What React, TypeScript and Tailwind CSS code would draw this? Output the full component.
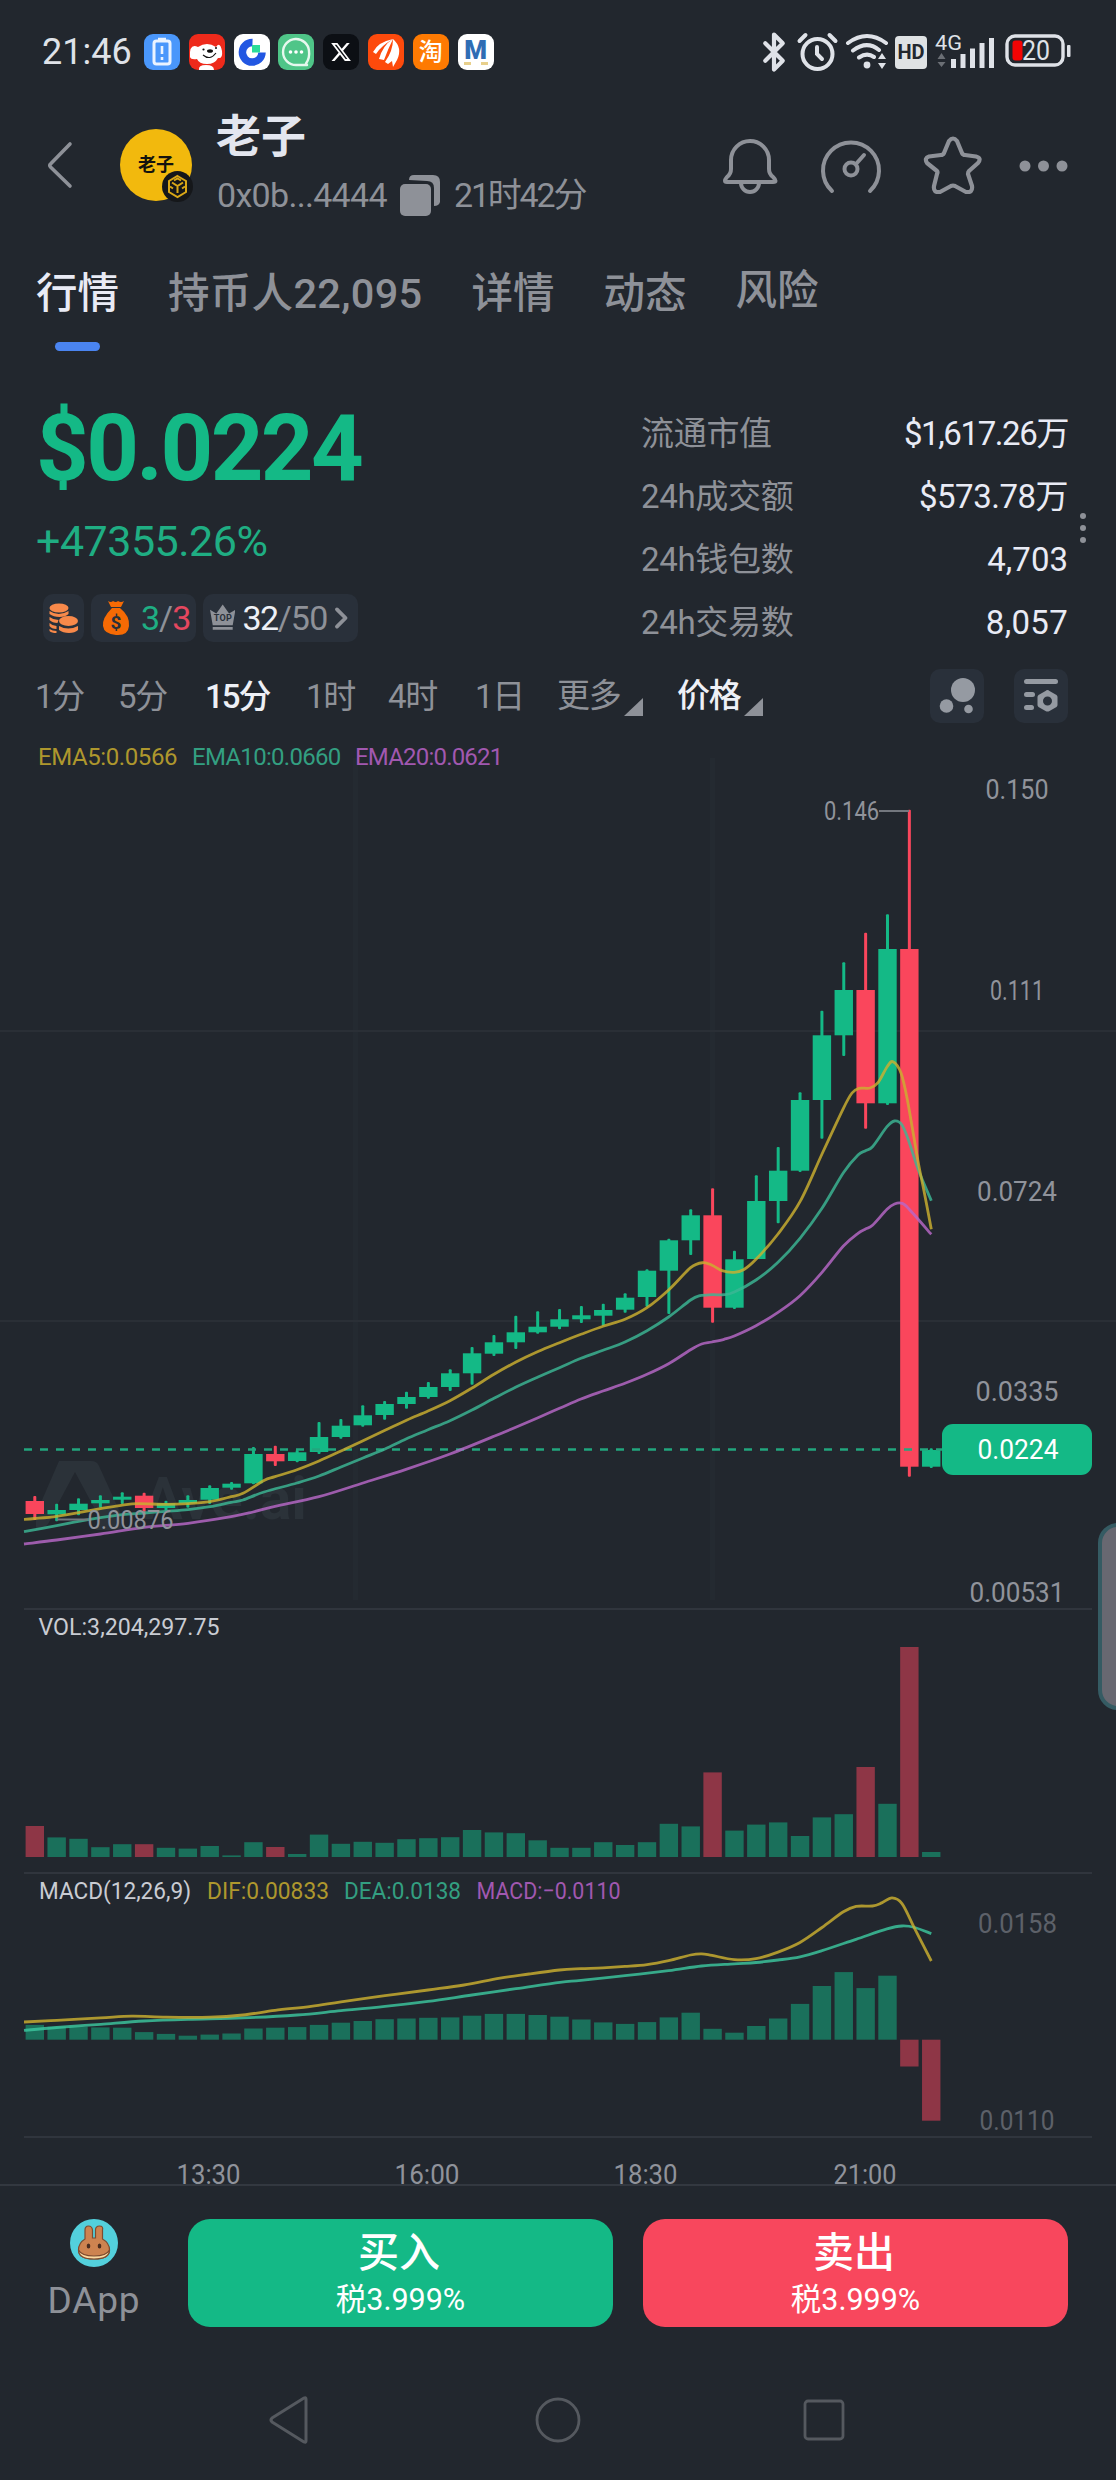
import React from "react";
import { Bluetooth, ChevronRight } from "lucide-react";
import { FaXTwitter } from "react-icons/fa6";

const UP = "#14b986";
const DOWN = "#fa465c";
const FONT = "font-['Roboto','Noto_Sans_CJK_SC',sans-serif]";

// Chart geometry, in page pixels
const FIRST_X = 34.8;
const STEP = 21.864;
const BAR_W = 18.4;

const cx = (i: number) => FIRST_X + i * STEP;

// [high, body top, body bottom, low]
const candles: [number, number, number, number][] = [
  [1496, 1501, 1514, 1520],
  [1503.7, 1510, 1514.3, 1521.3],
  [1498.3, 1503.7, 1510, 1515.3],
  [1495.3, 1500, 1503.3, 1507.7],
  [1492.3, 1496.7, 1499.7, 1504],
  [1492.7, 1495.7, 1508, 1515],
  [1500.7, 1503.3, 1508, 1510.7],
  [1495.3, 1500, 1503.3, 1507.7],
  [1485.3, 1488, 1499.7, 1504],
  [1482, 1483.7, 1487.7, 1489.7],
  [1447, 1454, 1483.3, 1484.3],
  [1445.7, 1454, 1461.3, 1466],
  [1450, 1452.3, 1461, 1462.3],
  [1422, 1437, 1452, 1454],
  [1419, 1425.7, 1437, 1438.7],
  [1405.3, 1415.3, 1425.3, 1426.7],
  [1401, 1404, 1415, 1419.7],
  [1391.7, 1397, 1404, 1408.7],
  [1382, 1387, 1397, 1398.7],
  [1369.3, 1373.3, 1387, 1391],
  [1347, 1353.3, 1373.3, 1384.7],
  [1335, 1342.3, 1353.7, 1356],
  [1315.7, 1332.3, 1342.3, 1349],
  [1311.3, 1326.7, 1332.3, 1333.7],
  [1309, 1319.3, 1326.7, 1329.3],
  [1306, 1315.3, 1319.3, 1323],
  [1303.7, 1310, 1315.7, 1325.7],
  [1293.3, 1297.7, 1309.7, 1312.7],
  [1269.3, 1270.7, 1297, 1306.7],
  [1238.7, 1240.3, 1270.7, 1314],
  [1209.3, 1215.3, 1240.3, 1255],
  [1188.3, 1215.3, 1307.7, 1322.7],
  [1250.7, 1259.3, 1307.7, 1309],
  [1175.3, 1201, 1259, 1259],
  [1147, 1170.7, 1201, 1223.3],
  [1092.3, 1100, 1170.7, 1172],
  [1010.7, 1035.3, 1100, 1138.7],
  [962.3, 990, 1035.3, 1056],
  [932.7, 990, 1103.3, 1128.7],
  [914.3, 949, 1103.3, 1105],
  [809.7, 949, 1466.7, 1476.7],
  [1448.3, 1450, 1466.7, 1468],
];
const redCandles = [0, 5, 11, 31, 38, 40];

const volume = [
  31, 19.6, 18.2, 9.8, 12.8, 12.8, 9.2, 8.4, 11, 1.6, 14.8, 10, 3, 22.4, 13.2, 15.2, 14.2, 17.8,
  18.8, 19.8, 27, 24.6, 23.8, 16.7, 9.2, 9.2, 14.8, 12, 14.8, 33.2, 30.6, 84.6, 26.4, 32.4, 34.6,
  21, 39.6, 42.8, 90, 53.2, 210, 5,
];

const macd = [
  14.8, 13, 13, 12.3, 12, 7.6, 5.8, 4, 5.1, 6.2, 11.2, 12, 12.6, 14.8, 17, 18.7, 20.5, 21.2, 21.9,
  22.3, 24, 25.8, 25.8, 24.7, 23, 20.2, 17.3, 15.8, 17.6, 22.3, 27, 10.9, 7, 13.7, 21.2, 35.8, 53.7,
  67.6, 51.6, 64, -26.8, -81,
];

type Pt = [number, number];

const ema5: Pt[] = [
  [24, 1519.3], [35, 1518.5], [56.7, 1516.3], [78.6, 1512.7], [100.5, 1508.7], [122.4, 1505.2],
  [138, 1503.7], [166, 1504.3], [188, 1503.7], [210, 1501.7], [231, 1496.7], [243, 1493.3],
  [264, 1480.5], [275, 1476.7], [297, 1469.7], [319, 1461], [341, 1451], [363, 1440.7],
  [385, 1430.3], [407, 1420], [428, 1411], [450, 1400.7], [472, 1388], [494, 1374.3], [516, 1362],
  [538, 1351.5], [559.5, 1342.7], [581, 1334.3], [603, 1326.3], [625, 1319.3], [647, 1307.7],
  [668.6, 1290], [690.6, 1267.7], [703, 1262.7], [712, 1265.3], [722, 1270.7], [734.3, 1272.3],
  [744, 1269.5], [756, 1259.3], [778, 1234], [800, 1201.7], [822, 1154], [843.4, 1108.3],
  [852, 1093], [859, 1088.3], [870, 1088], [878, 1082.7], [887, 1067], [893, 1061.7],
  [901, 1073], [907.4, 1100], [918.4, 1163.3], [924, 1191], [931.3, 1229.3],
];
const ema10: Pt[] = [
  [24, 1531.7], [56.7, 1525.7], [78.6, 1521.3], [100.5, 1517.7], [122.4, 1514.7], [144, 1513],
  [166, 1511.3], [188, 1509.7], [210, 1506.7], [231, 1502.3], [243, 1500], [264, 1492],
  [297, 1483], [319, 1476], [341, 1467], [363, 1458], [385, 1449], [406, 1439], [428, 1429.7],
  [450, 1420.7], [472, 1410], [494, 1398.3], [516, 1387], [538, 1377], [559.5, 1367.7],
  [581, 1358.3], [603, 1350.3], [625, 1342], [647, 1330.7], [668.6, 1317], [690.6, 1300],
  [700, 1295.7], [712, 1294.7], [724, 1294.7], [734.3, 1292], [756, 1280], [778, 1262.3],
  [800, 1238.3], [822, 1208.3], [843.4, 1172.7], [858, 1155], [865.5, 1150.7], [872.5, 1146.7],
  [887, 1126.7], [894.5, 1121], [902, 1125], [909, 1141.7], [918.4, 1170], [931.3, 1200.7],
];
const ema20: Pt[] = [
  [24, 1544], [56.7, 1540], [100.5, 1534], [144, 1527.3], [188, 1523.3], [231, 1516.7],
  [253, 1512], [275, 1506.3], [319, 1496.7], [363, 1483], [406, 1469.3], [450, 1454],
  [494, 1436.3], [538, 1417.7], [559.5, 1408.3], [581, 1399], [603, 1391], [625, 1383.3],
  [647, 1374.3], [668.6, 1363.7], [690.6, 1349.7], [701.6, 1344], [712, 1342], [724, 1339.3],
  [734.3, 1336], [756, 1325.7], [778, 1312.3], [800, 1295.7], [822, 1272.3], [843.4, 1246],
  [858, 1233.3], [865.5, 1229], [872.5, 1225.3], [887, 1209.3], [894.5, 1204], [902, 1203.3],
  [909, 1209], [931.3, 1234.3],
];
const dif: Pt[] = [
  [24, 2022], [56.8, 2020.4], [100.7, 2017.9], [132, 2016.1], [166, 2017.1], [210, 2017.1],
  [243, 2015], [275, 2010.4], [311, 2006.4], [341, 2001.8], [385, 1995.7], [428, 1990],
  [464, 1985], [500, 1978.2], [529, 1974], [559.5, 1970], [581, 1968.6], [603, 1967.9],
  [625, 1966.4], [647, 1964.6], [668.6, 1960.7], [690.6, 1955], [701.6, 1953.9], [712, 1955.4],
  [734.3, 1959.6], [756, 1958.6], [778, 1952.1], [800, 1942.5], [822, 1927.5], [843.4, 1911.8],
  [856, 1906.4], [872.5, 1906], [881.7, 1902.9], [892, 1897.9], [902, 1903.6], [914.7, 1928.6],
  [931.3, 1961],
];
const dea: Pt[] = [
  [24, 2030.4], [56.8, 2027.5], [100.7, 2024.3], [144, 2021], [188, 2019.3], [243, 2017.9],
  [297, 2015], [341, 2010.7], [385, 2006.4], [428, 2001.4], [472, 1995], [516, 1988.6],
  [560, 1982.3], [581, 1980.4], [625, 1975.7], [668.6, 1970.7], [701.6, 1966], [734.3, 1963.9],
  [756, 1962.5], [778, 1960], [800, 1956.8], [822, 1950.7], [856, 1939.3], [887, 1928.9],
  [902, 1926], [914.7, 1927.5], [931.3, 1933.6],
];

const r1 = (n: number) => Math.round(n * 10) / 10;

// Catmull-Rom spline through the points
const smooth = (p: Pt[]) =>
  p.reduce((d, [x, y], i) => {
    if (i === 0) return `M${x} ${y}`;
    const a = p[Math.max(i - 2, 0)];
    const b = p[i - 1];
    const e = p[Math.min(i + 1, p.length - 1)];
    return `${d}C${r1(b[0] + (x - a[0]) / 6)} ${r1(b[1] + (y - a[1]) / 6)} ${r1(
      x - (e[0] - b[0]) / 6
    )} ${r1(y - (e[1] - b[1]) / 6)} ${x} ${y}`;
  }, "");

const Line: React.FC<{ points: Pt[]; color: string }> = ({ points, color }) => (
  <path d={smooth(points)} fill="none" stroke={color} strokeWidth={2.8} strokeOpacity={0.82} />
);

const ChartText: React.FC<{
  x: number;
  y: number;
  w: number;
  size?: number;
  fill?: string;
  children: string;
}> = ({ x, y, w, size = 28, fill = "#90939b", children }) => (
  <text x={x - w / 2} y={y + size * 0.35} fontSize={size} fill={fill} textLength={w} lengthAdjust="spacingAndGlyphs">
    {children}
  </text>
);

const StatusBar = () => (
  <div className="flex h-[104px] items-center pl-[42px] pr-[44px] text-[#dfe2e8]">
    <span className="w-[102px] text-[36px] leading-none">21:46</span>
    <div className="flex gap-[8.8px]">
      <svg width="36" height="36" viewBox="0 0 36 36">
        <rect width="36" height="36" rx="9" fill="#4a97fb" />
        <rect x="10" y="7" width="16" height="23" rx="2.5" fill="none" stroke="#eaf3ff" strokeWidth="3" />
        <path d="M14 5h8M18 12v8M18 23v3" stroke="#eaf3ff" strokeWidth="2.6" />
      </svg>
      <svg width="36" height="36" viewBox="0 0 36 36">
        <rect width="36" height="36" rx="9" fill="#ee2a1b" />
        <path d="M9 13Q18 7 27 13Q31 7 33 17Q34 25 29 24Q26 30 18 30T8 25Q2 26 1 23Q0 9 9 13Z" fill="#fff" />
        <path d="M10 36Q9 31 17 31T25 36Z" fill="#fff" />
        <ellipse cx="21" cy="17" rx="3" ry="1.8" fill="#111" />
        <circle cx="14.5" cy="15.5" r="1.1" fill="#111" />
        <circle cx="27" cy="14" r="1" fill="#111" />
        <path d="M14 21Q21 27 27 19" fill="none" stroke="#111" strokeWidth="1.1" />
      </svg>
      <svg width="36" height="36" viewBox="0 0 36 36">
        <rect width="36" height="36" rx="9" fill="#fff" />
        <path d="M18.5 8.5A9.8 9.8 0 1 0 28 18.500" fill="none" stroke="#2257e2" strokeWidth="7.500" />
        <rect x="18" y="11" width="8" height="7.5" fill="#2bdc9a" />
      </svg>
      <svg width="36" height="36" viewBox="0 0 36 36">
        <rect width="36" height="36" rx="9" fill="#4fc588" />
        <path d="M28 29.500Q32 24 31 17A13 13 0 1 0 18 31H29Z" fill="none" stroke="#e6f8ee" strokeWidth="2.4" strokeLinejoin="round" />
        <circle cx="12.500" cy="18" r="1.800" fill="#fff" />
        <circle cx="18" cy="18" r="1.800" fill="#fff" />
        <circle cx="23.500" cy="18" r="1.800" fill="#fff" />
      </svg>
      <span className="flex h-9 w-9 items-center justify-center rounded-[9px] bg-[#0c0f14]">
        <FaXTwitter className="h-[22px] w-[22px] text-white" />
      </span>
      <svg width="36" height="36" viewBox="0 0 36 36">
        <rect width="36" height="36" rx="9" fill="#fd4a0c" />
        <path d="M5 18Q10 8 25 5Q13 12 8 20ZM11 25Q15 11 25 5Q20 15 16 26ZM17 28Q25 17 25 5Q35 14 29 26L25 33L24 27L20 30Z" fill="#fff" />
      </svg>
      <span className="flex h-9 w-9 items-center justify-center rounded-[9px] bg-[#fe7a02] text-[24px] font-medium leading-none text-white">
        淘
      </span>
      <span className="flex h-9 w-9 flex-col items-center justify-center rounded-[9px] bg-white leading-none">
        <span className="text-[26px] font-black leading-[20px] text-[#2f6db4]">M</span>
        <span className="mt-[2px] h-[3px] w-6 border-x-[7px] border-[#e8d08c]" />
      </span>
    </div>
    <div className="ml-auto flex items-center">
      <Bluetooth className="mr-[1px] h-[42px] w-[42px]" strokeWidth={2.4} />
      <svg width="43" height="42" viewBox="0 0 43 42" fill="none" stroke="currentColor" strokeWidth="4" strokeLinecap="round">
        <circle cx="21.500" cy="23" r="15" />
        <path d="M21 16v7l5 5M3.500 10l6-6M39.500 10l-6-6" />
      </svg>
      <svg className="ml-[6px]" width="44" height="42" viewBox="3 0 44 42" fill="none" stroke="currentColor" strokeWidth="4" strokeLinecap="round">
        <path d="M6 12Q25-2 44 12M11 19.500Q25 9 37 19M17 26.500Q25 21 32 26" />
        <circle cx="25" cy="34" r="3.400" fill="currentColor" stroke="none" />
        <path d="M36 28l4-6 4 6ZM36 32l4 6 4-6Z" fill="currentColor" stroke="none" />
      </svg>
      <span className="ml-[6px] mr-[8px] flex h-[33px] w-8 items-center justify-center rounded-[4px] bg-[#dfe2e4] text-[20px] font-bold leading-none text-[#22272e]">
        HD
      </span>
      <svg width="62" height="40" viewBox="0 0 62 40" fill="currentColor">
        <text x="0" y="18" fontSize="21" textLength="27" lengthAdjust="spacingAndGlyphs">4G</text>
        <path d="M2.500 27l4-6 4 6ZM2.500 30l4 5 4-5Z" fill="#6b6f75" />
        <path d="M16 27h5v9h-5ZM25.500 22h5v14h-5ZM35 16.500h5v19.500h-5ZM44.500 11h5v25h-5ZM54 6h5v30h-5Z" />
      </svg>
      <svg className="mb-[2px] ml-[8px]" width="67" height="34" viewBox="0 0 67 34">
        <rect x="2" y="2" width="56" height="29" rx="8" fill="none" stroke="currentColor" strokeWidth="3.400" />
        <rect x="7.500" y="6.500" width="10" height="20" rx="3" fill="#f30404" />
        <text x="17" y="26" fontSize="27" fill="currentColor" textLength="28" lengthAdjust="spacingAndGlyphs">20</text>
        <rect x="62" y="11" width="3.500" height="12" rx="1" fill="currentColor" />
      </svg>
    </div>
  </div>
);

const Header = () => (
  <div className="flex h-[130px] items-center pl-[46px] pr-[47px]">
    <svg width="28" height="50" viewBox="0 0 28 50" className="mb-[8px]" fill="none" stroke="#8e9198" strokeWidth="3.600" strokeLinecap="round" strokeLinejoin="round">
      <path d="M24 4L4.500 24Q3 25 4.500 27L24 46" />
    </svg>
    <div className="relative mb-[8px] ml-[46px] flex h-[72px] w-[72px] items-center justify-center rounded-full bg-[#f2b90d]">
      <span className="text-[18px] font-bold leading-none text-[#14130e]">老子</span>
      <svg className="absolute -bottom-[1px] -right-[1px]" width="31" height="31" viewBox="0 0 31 31">
        <circle cx="15.500" cy="15.500" r="15.500" fill="#15171a" />
        <g fill="none" stroke="#d9a717" strokeWidth="2">
          <path d="M15.500 5L24 10v11l-8.500 5L7 21V10Z" />
          <path d="M10 11.500l5.500 3.500 5.500-3.500M15.500 15v7M11 17.500l-3-2M20 17.500l3-2M12 9.500l3.500-2 3.500 2" />
        </g>
      </svg>
    </div>
    <div className="mb-[5px] ml-[25px] flex flex-col">
      <span className="-ml-[1px] text-[45px] font-bold leading-[50px] text-[#e3e6ef]">老子</span>
      <div className="mt-[7px] flex h-[50px] items-center text-[34px] leading-none text-[#8e9198]">
        <span className="w-[183px] tracking-[-0.7px]">0x0b...4444</span>
        <svg width="40" height="42" viewBox="0 0 40 42" fill="#8e9198">
          <rect y="10" width="31" height="32" rx="5" />
          <path d="M9 6Q9 1 14 1H33Q40 1 40 8V28Q39 32 34 32V14Q34 7 27 7Z" />
        </svg>
        <span className="ml-[14px] tracking-[-2.200px]">21时42分</span>
      </div>
    </div>
    <div className="mb-[9px] ml-auto flex items-center text-[#8e9198]">
      <svg width="56" height="58" viewBox="0 0 56 58" fill="none" stroke="currentColor" strokeWidth="4" strokeLinejoin="round">
        <path d="M9 24a19 19 0 0 1 38 0v9q0 5 4 8q5 5 0 5H5q-4 0 0-5q4-3 4-8Z" />
        <path d="M19 47a9 9 0 0 0 18 0" />
      </svg>
      <svg className="ml-[42px]" width="62" height="58" viewBox="0 0 62 58" fill="none" stroke="currentColor" strokeWidth="4" strokeLinecap="round">
        <path d="M12 55A28 28 0 1 1 50 55" />
        <circle cx="31" cy="33" r="6.500" />
        <path d="M36 28l8-9" />
      </svg>
      <svg className="ml-[41px]" width="60" height="58" viewBox="0 0 60 58" fill="none" stroke="currentColor" strokeWidth="4.200" strokeLinejoin="round">
        <path d="M26 5Q30 0 34 5L39 17Q40 19 42 19L53 20.500Q59 22 55 27L46 35Q45 36 45 38L49 50Q50 57 43 56L32 50Q30 49 28 50L17 56Q10 57 11 50L14 38Q15 36 14 35L4 27Q1 22 6 20.500L18 19Q20 19 21 17Z" />
      </svg>
      <svg className="ml-[36px] mt-[2px]" width="50" height="14" viewBox="0 0 50 14" fill="currentColor">
        <circle cx="6" cy="7" r="5.500" />
        <circle cx="24.500" cy="7" r="5.500" />
        <circle cx="43" cy="7" r="5.500" />
      </svg>
    </div>
  </div>
);

const Tabs = () => (
  <div className="flex h-[126px] items-start gap-[49px] pl-[36px] pt-[39px] text-[41.500px] font-medium leading-[42px] text-[#8e9198]">
    <div className="flex flex-col items-center text-[#e9ebf5]">
      <span>行情</span>
      <span className="mt-[27px] h-[9px] w-[45px] rounded-full bg-[#4a84f0]" />
    </div>
    <span className="tracking-[0.300px]">持币人22,095</span>
    <span>详情</span>
    <span>动态</span>
    <span className="-mt-[3px]">风险</span>
  </div>
);

const stats = [
  ["流通市值", "$1,617.26万", "tracking-[-1.4px]"],
  ["24h成交额", "$573.78万", "tracking-[-0.5px]"],
  ["24h钱包数", "4,703", "tracking-normal"],
  ["24h交易数", "8,057", "tracking-[0.3px]"],
];

const Summary = () => (
  <div className="relative flex h-[302px] pl-[36px] pr-[48px]">
    <div className="flex w-[605px] flex-col">
      <span className="mt-[43px] h-[92px] text-[92px] font-bold leading-[92px] tracking-[-2.600px] text-[#14b986]">
        $0.0224
      </span>
      <span className="mt-[24px] h-[44px] text-[43px] leading-[44px] tracking-[-0.500px] text-[#1fae83]">
        +47355.26%
      </span>
      <div className="ml-[7px] mt-[31px] flex h-[48px] gap-[7px] text-[34px] leading-none">
        <div className="flex w-[41px] items-center justify-center rounded-[10px] bg-[#29303a]">
          <svg width="32" height="32" viewBox="0 0 32 32" fill="#f8894a">
            <ellipse cx="11" cy="6" rx="9.500" ry="4.500" />
            <path d="M1.500 9q9 6 19 0v3q-3 3-9 3t-10-3ZM1.500 15q4 3 9 3l-1 3q-5 0-8-3ZM1.500 21q3 3 7 3v3q-5 0-7-3ZM1.500 27q3 2 7 2v2q-5 0-7-2Z" />
            <ellipse cx="20.500" cy="19" rx="9.500" ry="5" />
            <path d="M11 24q9 5 19 0v4q-3 3-9 3t-10-3Z" />
          </svg>
        </div>
        <div className="flex w-[105px] items-center rounded-[10px] bg-[#29303a] pl-[11px]">
          <svg width="28" height="36" viewBox="0 0 28 36" fill="#f56a04">
            <path d="M6 1q3 2 5 0q3 2 5 0q3 2 6 0l-3 6H9ZM10 8h8Q28 16 27 26T14 35T1 26T10 8Z" />
            <text x="8.500" y="29" fontSize="19" fontWeight="700" fill="#29303a">$</text>
          </svg>
          <span className="ml-[11px] tracking-[-1px] text-[#8e9198]">
            <span className="text-[#1fae83]">3</span>/<span className="text-[#e5475f]">3</span>
          </span>
        </div>
        <div className="flex w-[155px] items-center rounded-[10px] bg-[#29303a] pl-[7px]">
          <svg width="28" height="30" viewBox="0 0 28 30" fill="#8e9198">
            <path d="M0 6l7 4 7-10 7 10 7-4-3 17H3ZM3 25h22v3H3Z" />
            <text x="4" y="18.500" fontSize="10" fontWeight="700" fill="#29303a" textLength="20">TOP</text>
          </svg>
          <span className="ml-[7px] tracking-[-1.500px] text-[#eef0f6]">32</span>
          <span className="tracking-[-0.800px] text-[#8e9198]">/50</span>
          <ChevronRight className="-ml-[4px] h-[42px] w-[38px] text-[#8e9198]" strokeWidth={2.600} />
        </div>
      </div>
    </div>
    <div className="mt-[42px] flex-1 text-[33px] leading-[63px]">
      {stats.map(([label, value, tracking]) => (
        <div key={label} className="flex h-[63px] items-center justify-between">
          <span className="tracking-[-0.300px] text-[#8e9198]">{label}</span>
          <span className={`${tracking} text-[#e9ebf5]`}>{value}</span>
        </div>
      ))}
    </div>
    {/* page indicator */}
    <div className="absolute right-[30px] top-[153px] flex flex-col gap-[6px]">
      <i className="h-[6px] w-[6px] rounded-full bg-[#8e9198]" />
      <i className="h-[6px] w-[6px] rounded-full bg-[#8e9198]" />
      <i className="h-[6px] w-[6px] rounded-full bg-[#8e9198]" />
    </div>
  </div>
);

const intervals = [
  ["1分", "w-[83px]"],
  ["5分", "w-[87px]"],
  ["15分", "w-[101px]"],
  ["1时", "w-[82px]"],
  ["4时", "w-[87px]"],
  ["1日", "w-[82px]"],
];

const Corner = () => (
  <svg className="ml-[3px] mt-[19px]" width="19" height="18" viewBox="0 0 19 18" fill="#8e9198">
    <path d="M19 0v18H0Z" />
  </svg>
);

const Intervals = () => (
  <div className="flex h-[68px] items-center pl-[35px] pr-[48px] text-[33px] leading-none tracking-[-1.200px] text-[#8e9198]">
    {intervals.map(([label, width]) => (
      <span key={label} className={`${width} ${label === "15分" ? "font-medium tracking-[-2px] text-[#eef0f6]" : ""}`}>
        {label}
      </span>
    ))}
    <div className="flex w-[120px] pt-[3px]">
      <span>更多</span>
      <Corner />
    </div>
    <div className="flex pt-[3px] font-medium text-[#eef0f6]">
      <span>价格</span>
      <Corner />
    </div>
    <div className="ml-auto flex gap-[30px]">
      <div className="flex h-[54px] w-[54px] items-center justify-center rounded-[10px] bg-[#29303a]">
        <svg width="36" height="36" viewBox="0 0 36 36" fill="#959aa2">
          <circle cx="24" cy="12" r="12" />
          <circle cx="7.500" cy="28" r="6.800" />
          <circle cx="29.500" cy="31" r="4.300" />
        </svg>
      </div>
      <div className="flex h-[54px] w-[54px] items-center justify-center rounded-[10px] bg-[#29303a]">
        <svg width="34" height="34" viewBox="0 0 34 34" fill="#959aa2">
          <rect width="34" height="5" rx="2.500" />
          <rect y="13" width="11" height="5" rx="2.500" />
          <rect y="26" width="10" height="5" rx="2.500" />
          <path d="M23.500 11q1 0 2 1l7 4q1 1 1 2v8q0 1-1 2l-7 4q-2 1-4 0l-7-4q-1-1-1-2v-8q0-1 1-2l7-4q1-1 2-1ZM23.500 17.500a4.500 4.500 0 1 0 0 9a4.500 4.500 0 1 0 0-9Z" fillRule="evenodd" />
        </svg>
      </div>
    </div>
  </div>
);

const axis: [string, number, number][] = [
  ["0.150", 789, 63],
  ["0.111", 990, 54],
  ["0.0724", 1191, 80],
  ["0.0335", 1391.5, 83],
  ["0.00531", 1592, 95],
];

const PriceChart = () => (
  <svg className="block" width="1116" height="880" viewBox="0 730 1116 880">
    <g fill="#242a31">
      <rect x="353" y="758" width="5" height="842" />
      <rect x="710" y="758" width="5" height="842" />
    </g>
    <path d="M0 1031H1116M0 1321H1116" stroke="#2a2f36" strokeWidth="2" />
    <g fill="#2b3239">
      <path d="M59 1461H91Q97 1461 99 1466L124 1521Q124 1531 112 1530H96Q101 1524 97 1513L75 1472L52 1515Q48 1530 36 1530V1514Z" />
      <text x="143" y="1519" fontSize="60" fontWeight="700" textLength="164" lengthAdjust="spacingAndGlyphs">
        Ave.ai
      </text>
    </g>
    <path d="M24 1609H1092" stroke="#30353d" strokeWidth="2" />
    {candles.map(([high, top, bottom, low], i) => {
      const color = redCandles.includes(i) ? DOWN : UP;
      return (
        <g key={i} fill={color}>
          <rect x={cx(i) - 1.5} y={high} width={3} height={low - high} rx={1} />
          <rect x={cx(i) - BAR_W / 2} y={top} width={BAR_W} height={bottom - top} />
        </g>
      );
    })}
    <path d="M24 1449.500H942" stroke="#22a67e" strokeWidth="2.600" strokeDasharray="8 8" />
    <Line points={ema20} color="#b868c8" />
    <Line points={ema10} color="#3cb795" />
    <Line points={ema5} color="#ccb030" />
    <path d="M879 811H909M57 1519.500H88" stroke="#73777e" strokeWidth="2" />
    <ChartText x={851.5} y={811} w={55} size={25}>0.146</ChartText>
    <ChartText x={130.500} y={1520} w={86} size={26}>0.00876</ChartText>
    {axis.map(([label, y, w]) => (
      <ChartText key={label} x={1017} y={y} w={w}>{label}</ChartText>
    ))}
    <rect x="942" y="1424" width="150" height="51" rx="11" fill={UP} />
    <ChartText x={1018} y={1449} w={81} fill="#fff">0.0224</ChartText>
  </svg>
);

const VolumeChart = () => (
  <svg className="block" width="1116" height="264" viewBox="0 1610 1116 264">
    <ChartText x={129} y={1626.5} w={181} size={24} fill="#c9ccd3">VOL:3,204,297.75</ChartText>
    {volume.map((h, i) => (
      <rect
        key={i}
        x={cx(i) - BAR_W / 2}
        y={1857 - h}
        width={BAR_W}
        height={h}
        fill={redCandles.includes(i) ? "#8e3646" : "#1a705b"}
      />
    ))}
    <path d="M24 1873H1092" stroke="#30353d" strokeWidth="2" />
  </svg>
);

const MacdChart = () => (
  <svg className="block" width="1116" height="264" viewBox="0 1874 1116 264">
    <ChartText x={115} y={1890.5} w={152} size={24} fill="#c9ccd3">MACD(12,26,9)</ChartText>
    <ChartText x={268} y={1890.5} w={122} size={24} fill="#ae972d">DIF:0.00833</ChartText>
    <ChartText x={402.500} y={1890.5} w={117} size={24} fill="#339f81">DEA:0.0138</ChartText>
    <ChartText x={548.500} y={1890.5} w={144} size={24} fill="#a158b0">MACD:−0.0110</ChartText>
    {macd.map((v, i) => (
      <rect
        key={i}
        x={cx(i) - BAR_W / 2}
        y={v > 0 ? 2039.7 - v : 2039.7}
        width={BAR_W}
        height={Math.abs(v)}
        fill={v > 0 ? "#1a705b" : "#8e3646"}
      />
    ))}
    <Line points={dea} color="#3cc79f" />
    <Line points={dif} color="#ccb030" />
    <ChartText x={1017.500} y={1923} w={79} fill="#5d6169">0.0158</ChartText>
    <ChartText x={1017} y={2120} w={75} fill="#5d6169">0.0110</ChartText>
    <path d="M24 2137H1092" stroke="#30353d" strokeWidth="2" />
  </svg>
);

const TimeAxis = () => (
  <svg className="block overflow-visible" width="1116" height="46" viewBox="0 2138 1116 46">
    <ChartText x={208.500} y={2174} w={64}>13:30</ChartText>
    <ChartText x={427} y={2174} w={65}>16:00</ChartText>
    <ChartText x={645.500} y={2174} w={64}>18:30</ChartText>
    <ChartText x={865} y={2174} w={63}>21:00</ChartText>
  </svg>
);

const TradeBar = () => (
  <div className="flex h-[174px] border-t-2 border-[#333840] pl-[44px] pr-[48px] pt-[33px]">
    <div className="flex w-[100px] flex-col items-center">
      <svg width="48" height="48" viewBox="0 0 48 48">
        <circle cx="24" cy="24" r="24" fill="#53d0dc" />
        <g fill="#cd8350" stroke="#7d4c30" strokeWidth="1.200">
          <path d="M15 11q0-4 3.500-4t4 4v8h3v-8q0-4 4-4t3 4v9q7 4 7 11q0 9-15.500 9T8.500 31q0-7 6.500-11Z" />
          <path d="M8.500 31q3 6 15.500 6t15.500-6q0 9-15.500 9T8.500 31Z" fill="#fcd9a0" />
        </g>
        <ellipse cx="18.500" cy="27" rx="1.800" ry="2.600" fill="#4a2c1e" />
        <ellipse cx="29.500" cy="27" rx="1.800" ry="2.600" fill="#4a2c1e" />
      </svg>
      <span className="mt-[15px] text-[37px] leading-[38px] tracking-[0.800px] text-[#8e9198]">DApp</span>
    </div>
    <div className="ml-[44px] flex h-[108px] flex-1 gap-[30px] text-white">
      <button className="flex flex-1 flex-col items-center rounded-[22px] bg-[#14b986] pt-[11px]">
        <span className="-ml-[3px] text-[41px] font-medium leading-[46px]">买入</span>
        <span className="mt-[6px] text-[30.500px] leading-[36px]">税3.999%</span>
      </button>
      <button className="flex flex-1 flex-col items-center rounded-[22px] bg-[#f8475d] pt-[11px]">
        <span className="-ml-[3px] text-[41px] font-medium leading-[46px]">卖出</span>
        <span className="mt-[6px] text-[30.500px] leading-[36px]">税3.999%</span>
      </button>
    </div>
  </div>
);

const NavBar = () => (
  <div className="flex h-[123px] items-center justify-between pl-[267px] pr-[270px] text-[#55595f]">
    <svg width="44" height="50" viewBox="0 0 44 50" fill="none" stroke="currentColor" strokeWidth="3" strokeLinejoin="round">
      <path d="M39 4v42q0 2-2 1L5 27q-2-2 0-4L37 3q2-1 2 1Z" />
    </svg>
    <svg width="48" height="48" viewBox="0 0 48 48" fill="none" stroke="currentColor" strokeWidth="2.800">
      <circle cx="25" cy="24" r="21" />
    </svg>
    <svg width="44" height="44" viewBox="0 0 44 44" fill="none" stroke="currentColor" strokeWidth="2.800">
      <rect x="3" y="3" width="38" height="38" rx="3" />
    </svg>
  </div>
);

const App: React.FC = () => (
  <div className={`relative h-[2480px] w-[1116px] overflow-hidden bg-[#22272e] ${FONT}`}>
    <StatusBar />
    <Header />
    <Tabs />
    <Summary />
    <Intervals />
    <div className="relative">
      <div className="absolute left-[38px] top-[15px] flex text-[24px] leading-none">
        <span className="w-[154px] tracking-[-0.400px] text-[#ae972d]">EMA5:0.0566</span>
        <span className="w-[163px] tracking-[-0.700px] text-[#339f81]">EMA10:0.0660</span>
        <span className="tracking-[-0.800px] text-[#a158b0]">EMA20:0.0621</span>
      </div>
      <PriceChart />
    </div>
    <VolumeChart />
    <MacdChart />
    <TimeAxis />
    <TradeBar />
    <NavBar />
    {/* edge panel handle */}
    <div className="absolute -right-[22px] top-[1523px] h-[187px] w-[40px] rounded-[20px] border-[4px] border-[#355b63] bg-[#686871]" />
  </div>
);

export default App;
